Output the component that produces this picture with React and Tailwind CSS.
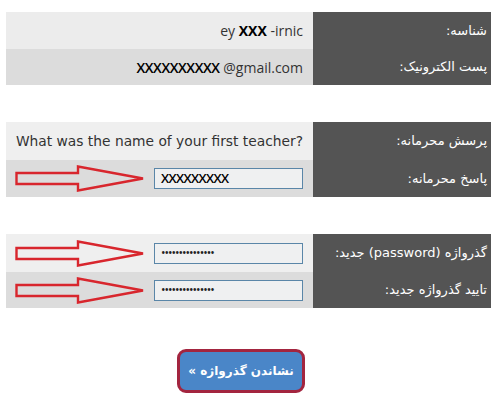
import React from "react";

function Arrow() {
  return (
    <svg width="130" height="27" viewBox="0 0 130 27" className="shrink-0">
      <polygon
        points="1.5,8 63,8 63,1.5 128,13.5 63,25.5 63,19 1.5,19"
        fill="none"
        stroke="#d8262d"
        strokeWidth="2.4"
        strokeLinejoin="miter"
      />
    </svg>
  );
}

function Field({ value, mono }) {
  return (
    <div className="w-[149px] h-[21px] border border-[#5a86a8] bg-[#eff0f1] flex items-center px-1.5">
      <span
        className={
          mono
            ? "text-[13px] text-black leading-none font-semibold tracking-[-0.6px]"
            : "text-[12px] text-[#222] leading-none tracking-[-1px]"
        }
        style={{ fontFamily: "'Open Sans', sans-serif" }}
      >
        {value}
      </span>
    </div>
  );
}

function Row({ label, bg, h, children }) {
  return (
    <div className={`flex ${h}`}>
      <div className={`w-[307px] ${bg} flex items-center justify-end pr-[10px] pl-[9px]`}>
        {children}
      </div>
      <div
        dir="rtl"
        className="w-[178px] bg-[#545454] flex items-center pr-[4px] text-white text-[13px]"
        style={{ fontFamily: "'DejaVu Sans', sans-serif" }}
      >
        {label}
      </div>
    </div>
  );
}

export default function App() {
  return (
    <div className="w-[500px] h-[400px] bg-white relative overflow-hidden">
      <div className="pl-[6px] pt-[12px] flex flex-col">
        <div className="flex flex-col w-[485px]">
          <Row label="شناسه:" bg="bg-[#ececec]" h="h-[37px]">
            <span className="text-[14px] text-[#333]" style={{ fontFamily: "'Open Sans', sans-serif" }}>
              ey <b className="font-bold text-black">XXX</b> -irnic
            </span>
          </Row>
          <Row label="پست الکترونیک:" bg="bg-[#dcdcdc]" h="h-[36px]">
            <span className="text-[14px] text-[#333]" style={{ fontFamily: "'Open Sans', sans-serif" }}>
              <span className="text-black font-semibold tracking-[-0.4px]">XXXXXXXXXX</span> @gmail.com
            </span>
          </Row>
        </div>

        <div className="flex flex-col w-[485px] mt-[37px]">
          <Row label="پرسش محرمانه:" bg="bg-[#efefef]" h="h-[38px]">
            <span className="text-[13.8px] text-[#333] whitespace-nowrap" style={{ fontFamily: "'DejaVu Sans', sans-serif" }}>
              What was the name of your first teacher?
            </span>
          </Row>
          <Row label="پاسخ محرمانه:" bg="bg-[#dcdcdc]" h="h-[37px]">
            <div className="flex items-center justify-between w-full">
              <Arrow />
              <Field value="XXXXXXXXX" mono />
            </div>
          </Row>
        </div>

        <div className="flex flex-col w-[485px] mt-[37px]">
          <Row label="گذرواژه (password) جدید:" bg="bg-[#efefef]" h="h-[38px]">
            <div className="flex items-center justify-between w-full">
              <Arrow />
              <Field value="•••••••••••••••" />
            </div>
          </Row>
          <Row label="تایید گذرواژه جدید:" bg="bg-[#dcdcdc]" h="h-[36px]">
            <div className="flex items-center justify-between w-full">
              <Arrow />
              <Field value="•••••••••••••••" />
            </div>
          </Row>
        </div>

        <div className="flex mt-[41px] pl-[171px]">
          <button
            dir="rtl"
            className="w-[128px] h-[44px] rounded-[9px] border-[3px] border-[#a3253f] bg-[#4a86c8] text-white text-[12px] font-bold flex items-center justify-center"
            style={{ fontFamily: "'DejaVu Sans', sans-serif" }}
          >
            نشاندن گذرواژه »
          </button>
        </div>
      </div>
    </div>
  );
}
